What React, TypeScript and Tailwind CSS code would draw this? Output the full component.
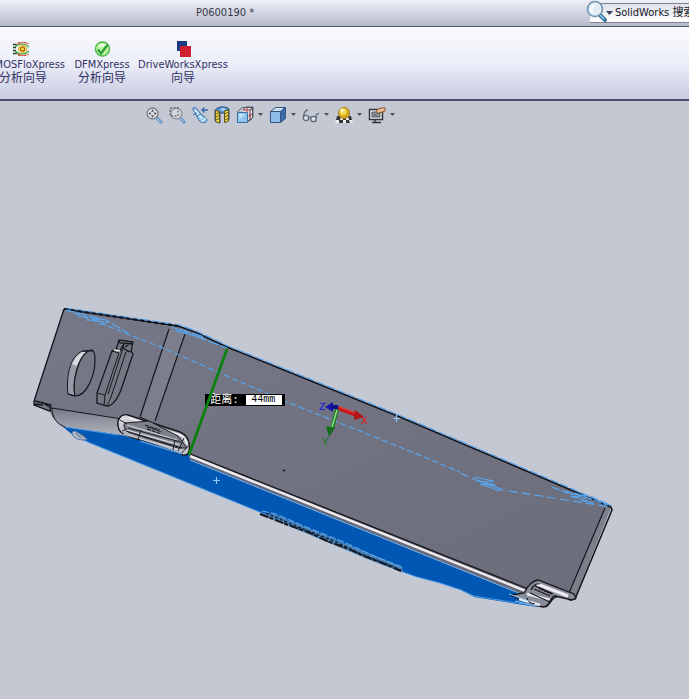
import React from "react";

// Small drop-down marker used next to view tools
const Caret = () => (
    <svg width="5" height="3" viewBox="0 0 5 3" aria-hidden="true">
        <path d="M0 0h5L2.500 3z" fill="#4b4f5c" />
    </svg>
);

const FloIcon = () => (
    <svg width="18" height="16" viewBox="0 0 18 16" fill="none">
        <path d="M1 3.500h4M1 6.500h3M1 9.500h3M1 12.500h4" stroke="#23402a" strokeWidth="1.500" />
        <path d="M4 4.500C7 1 13 1 17 3M4 11.500c3 3.500 9 3.500 13 1.500" stroke="#e07a5a" strokeWidth="1.200" />
        <path d="M6 1.500h9M6 14.500h9" stroke="#d05040" strokeDasharray="2 1" />
        <path d="M3 6c4-4 10-4 14 0M3 10c4 4 10 4 14 0" stroke="#3fa040" strokeWidth="1.200" />
        <path d="M6.500 8c0-4.500 8-4.500 8 0s-8 4.500-8 0z" fill="#f8ee3a" stroke="#d8a020" />
        <circle cx="10.500" cy="8" r="2" fill="#ffe840" stroke="#a8501c" strokeWidth="1.200" />
    </svg>
);

const DfmIcon = () => (
    <svg width="17" height="16" viewBox="0 0 17 16" fill="none">
        <circle cx="8.500" cy="8" r="7" fill="#b9f29c" stroke="#4cb848" strokeWidth="1.400" />
        <path d="M4 5.500C6 2 11 2 13 4.500 10 5 7 7 4 5.500z" fill="#effde6" />
        <path d="M4 8.500l3 4L13.500 4" stroke="#2a9a38" strokeWidth="2.200" />
    </svg>
);

const DriveIcon = () => (
    <svg width="15" height="16" viewBox="0 0 15 16">
        <path d="M1 0h10v10H1z" fill="#1c3a86" />
        <path d="M4 5h11v11H4z" fill="#cf2030" />
    </svg>
);

const ZoomFitIcon = () => (
    <svg width="18" height="18" viewBox="0 0 18 18" fill="none">
        <path d="M11 11l5 5" stroke="#5b8fc4" strokeWidth="3" strokeLinecap="round" />
        <path d="M11 11l4.500 4.500" stroke="#b9dcf5" strokeLinecap="round" />
        <circle cx="7.500" cy="7.500" r="5.500" fill="#d8dbe2" stroke="#777b86" strokeWidth="1.300" />
        <path d="M7.500 3.500l1.500 2H6zM7.500 11.500l1.500-2H6zM3.500 7.500l2-1.500v3zM11.500 7.500l-2-1.500v3z" fill="#34363d" />
    </svg>
);

const ZoomAreaIcon = () => (
    <svg width="18" height="18" viewBox="0 0 18 18" fill="none">
        <path d="M11 11l5 5" stroke="#5b8fc4" strokeWidth="3" strokeLinecap="round" />
        <path d="M11 11l4.500 4.500" stroke="#b9dcf5" strokeLinecap="round" />
        <circle cx="8.500" cy="7.500" r="5.500" fill="#d3d6de" stroke="#8b8f99" strokeWidth="1.300" />
        <path d="M2 2h8v8H2z" stroke="#4a4c54" strokeDasharray="2 1.500" />
    </svg>
);

const PreviousViewIcon = () => (
    <svg width="18" height="18" viewBox="0 0 18 18" fill="none">
        <path d="M1.500 2.500l3-1 5 6 5 4c3 2 1 6-3 5-2 0-4-2-5-5z" fill="#8fc3ea" stroke="#3b6ea4" />
        <path d="M4 4l7 9" stroke="#e8f5ff" strokeWidth="1.500" />
        <path d="M11 16l4-4" stroke="#d3ebfb" strokeWidth="1.500" />
        <path d="M2 9l4-2M6 10.500l4-3" stroke="#3b6ea4" />
        <path d="M17 4h-6M13.500 1.500L11 4l2.500 2.500" stroke="#3566a8" strokeWidth="1.300" />
    </svg>
);

const SectionIcon = () => (
    <svg width="16" height="18" viewBox="0 0 16 18">
        <path d="M1 4c3-4 11-4 14-1v11l-4 2V7H6v10l-5-2z" fill="#5b93cc" stroke="#34527a" />
        <path d="M1.500 4.500l4 1V17l-4-1.500z" fill="#f6dc3c" stroke="#5a5426" />
        <path d="M10.500 5l4-1v11l-4 1.500z" fill="#f6dc3c" stroke="#5a5426" />
        <path d="M2 8l3-1.500M2 11l3-1.500M2 14l3-1.500M11 8l3-1.500M11 11l3-1.500M11 14l3-1.500" stroke="#5a5426" />
        <path d="M6 3c2-1 4-1 6 0L9 5z" fill="#b9dcf6" />
    </svg>
);

const OrientationIcon = () => (
    <svg width="18" height="18" viewBox="0 0 18 18" fill="none">
        <path d="M7 4l3-3h7l-3 4v8l-3 3M14 4l3-3v10l-3 3" fill="#dfdfe6" stroke="#55565e" />
        <path d="M6 1.500h10.500V12l-4 4M1.500 6L6 1.500" stroke="#55565e" />
        <path d="M11 2v4M7 4h8M14 7v5M12.500 10l4-2" stroke="#b04040" />
        <path d="M1.500 6.500h10v10h-10z" fill="#8cc5ee" stroke="#3c6d9e" />
        <path d="M3 8h6l-6 6z" fill="#c0e2f8" />
    </svg>
);

const DisplayStyleIcon = () => (
    <svg width="18" height="18" viewBox="0 0 18 18" stroke="#36557f" strokeLinejoin="round">
        <path d="M1.500 5.500l5-4h10l-5 4z" fill="#c4e1f6" />
        <path d="M1.500 5.500h10v11h-10z" fill="#8ebee9" />
        <path d="M11.500 5.500l5-4v11l-5 4z" fill="#3d69ae" />
    </svg>
);

const GlassesIcon = () => (
    <svg width="18" height="18" viewBox="0 0 18 18" fill="none" stroke="#626875" strokeWidth="1.300">
        <circle cx="4" cy="12" r="2.700" fill="#d5e1e9" />
        <circle cx="11.500" cy="13" r="2.700" fill="#d5e1e9" />
        <path d="M6.500 12c1-1 2-1 2.500 0M1.500 11C2 6 3 4 6 4M14 12c0-4 1-5 3-4" />
    </svg>
);

const SceneIcon = () => (
    <svg width="18" height="18" viewBox="0 0 18 18">
        <path d="M3 10h12l3 7H0z" fill="#f2f2f2" />
        <path d="M2 10h4l-1 4H1zM8 12h3v2H8zM13 10h3l1 4h-3zM4 14h4v3H4zM11 14h3l1 3h-4z" fill="#33353b" />
        <circle cx="9" cy="7" r="5.500" fill="#d8aa20" stroke="#a37b12" />
        <circle cx="8" cy="5.500" r="3.500" fill="#f3dc58" />
        <circle cx="7" cy="4.500" r="1.500" fill="#fffbd8" />
    </svg>
);

const ViewSettingIcon = () => (
    <svg width="18" height="18" viewBox="0 0 18 18" fill="none">
        <path d="M1.500 3.500h13v10h-13z" fill="#eceef2" stroke="#34363d" strokeWidth="1.500" />
        <path d="M4 6h8v5H4z" fill="#9a9da6" stroke="#585b63" />
        <path d="M4 16.500h9M7 14v2" stroke="#34363d" strokeWidth="1.500" />
        <path d="M8 5l3-2.500 6-1v3.500l-4 1.500-3 1z" fill="#e9b98b" stroke="#8a5c38" />
        <path d="M4 7l8 4M4 11l8-5" stroke="#44464e" strokeDasharray="1 1" />
    </svg>
);

const wizards = [
    { label: "MOSFloXpress", sub: "分析向导", icon: <FloIcon />, box: "w-[65px] items-start", iconBox: "ml-3", labelBox: "self-end", subBox: "-ml-px" },
    { label: "DFMXpress", sub: "分析向导", icon: <DfmIcon />, box: "w-[54px] items-center", iconBox: "", labelBox: "", subBox: "" },
    { label: "DriveWorksXpress", sub: "向导", icon: <DriveIcon />, box: "w-[88px] items-center", iconBox: "", labelBox: "", subBox: "" },
];

const viewTools = [
    { name: "整屏显示全图", icon: <ZoomFitIcon />, menu: false },
    { name: "局部放大", icon: <ZoomAreaIcon />, menu: false },
    { name: "上一视图", icon: <PreviousViewIcon />, menu: false },
    { name: "剖面视图", icon: <SectionIcon />, menu: false },
    { name: "视图定向", icon: <OrientationIcon />, menu: true },
    { name: "显示样式", icon: <DisplayStyleIcon />, menu: true },
    { name: "隐藏/显示项目", icon: <GlassesIcon />, menu: true },
    { name: "应用布景", icon: <SceneIcon />, menu: true },
    { name: "视图设定", icon: <ViewSettingIcon />, menu: true },
];

const Model = () => (
    <svg className="block w-full" viewBox="0 128 689 571" fill="none">
        <defs>
            <linearGradient id="side" x1="0" y1="0" x2="1" y2="1">
                <stop offset="0" stopColor="#767887" />
                <stop offset="1" stopColor="#6b6d7b" />
            </linearGradient>
            <linearGradient id="fillet" x1="0" y1="0" x2="0" y2="1">
                <stop offset="0" stopColor="#777987" />
                <stop offset="1" stopColor="#b0b2bd" />
            </linearGradient>
            <linearGradient id="rim" x1="0" y1="0" x2="1" y2="1">
                <stop offset="0" stopColor="#e6e6ec" />
                <stop offset="0.5" stopColor="#8d8f9b" />
                <stop offset="1" stopColor="#c9cad2" />
            </linearGradient>
        </defs>

        {/* selected bottom face */}
        <path d="M62 426L118 434 188 453 277 491 440 557 530 594 545 603 538 607 517 604 474 597 461 590 440 583 417 577 400 571 262 513 90 443 74 436z" fill="#0058b4" />
        <path d="M538 606l-21-3-43-7-13-6-21-7-23-6-17-6-138-58L90 443l-16-7" stroke="#4d9ce8" />
        <path d="M72 432c0 6 5 8 15 8l-3-4-9-5z" fill="#b0b5c2" stroke="#5a7ba8" />
        <path d="M76 433l5 5M80 434l6 4" stroke="#4a6c9c" />

        {/* body */}
        <path d="M64 309L178 326 195 332 227 347 400 417 611 507 574 600 540 590 528 590 188 453 122 432 65 427 53 418 50 412 34 405 34 400z" fill="url(#side)" />
        <path d="M52 408l70 11-3 9 3 7-57-8c-8-3-13-9-13-19z" fill="url(#fillet)" />
        <path d="M170 328l15 5-30 88-14-4z" fill="#7c7e8b" />
        <path d="M605 508l6 0-37 91-6-5z" fill="#7c7e8b" />
        <path d="M190 456L528 593" stroke="#686a78" strokeWidth="6" />
        <path d="M190 456L528 592" stroke="#eeeaf0" strokeWidth="2.500" />
        <path d="M190 460L526 596" stroke="#8fb5df" />
        <path d="M188 453L528 589" stroke="#17171c" strokeWidth="1.300" />
        <path d="M64 309L178 326 195 332 227 347 400 417 611 507" stroke="#101116" strokeWidth="1.600" />
        <path d="M65 308L179 325 196 331 228 346 401 416 612 506" stroke="#4d9ce8" strokeWidth="1.200" strokeDasharray="9 2" />
        <path d="M64 309l114 17" stroke="#101116" strokeWidth="2" strokeDasharray="4 3" />
        <path d="M64 309L34 401v4l16 6 1-6-16-4M42 402l9 6M34 404l9 1" stroke="#121318" strokeWidth="1.300" />
        <path d="M52 408l70 11M52 408c0 10 5 16 13 19" stroke="#17171c" />
        <path d="M65 427l53 8" stroke="#4d9ce8" />
        <path d="M169 329l-29 88M185 334l-30 87" stroke="#17171c" strokeWidth="1.200" />
        <path d="M605 508l-36 85" stroke="#17171c" strokeWidth="1.200" />
        <path d="M611 507l1 3-37 89-6 1" stroke="#121318" strokeWidth="1.500" />

        {/* round button */}
        <path d="M83 351c-14 5-17 28-15 43l7 2c-3-15 3-38 13-45z" fill="#989aa7" stroke="#17171c" />
        <path d="M72 364c2-5 5-9 10-12l5 0c-5 3-8 8-10 14z" fill="#d7d8de" />
        <path d="M88 351c-10 7-16 30-13 45 12 0 20-21 20-36 0-5-1-9-3-10z" fill="#757785" stroke="#17171c" strokeWidth="1.200" />
        <path d="M83 351h10M68 394l7 2" stroke="#17171c" strokeWidth="1.200" />

        {/* slider slot */}
        <path d="M112 351l4-1 3-10 14 2-2 9 2 3-12 36c-5 12-10 16-14 16l-10-3v-10z" fill="#747684" stroke="#17171c" strokeWidth="1.300" />
        <path d="M119 353l-14 42-1 10M112 351l7 2M97 393l8 2M126 352l-15 45c-2 5-3 7-5 8M123 348l-15 46M131 352l-5-2" stroke="#17171c" />
        <path d="M116 350l4 1 3-6M119 340l1 3 13 1M124 343l-1 5 6 4M125 347l6-4" stroke="#17171c" strokeWidth="1.300" />
        <path d="M114 350l6 1" stroke="#f0f0f4" strokeWidth="1.500" />

        {/* connector opening */}
        <path d="M128 415c-8-2-11 6-10 11 1 6 4 8 8 9l57 20c7 1 7-7 6-12-1-6-4-9-9-11z" fill="url(#rim)" stroke="#17171c" strokeWidth="1.400" />
        <path d="M129 418l51 17c4 2 6 5 7 9" stroke="#eeeef2" strokeWidth="2" />
        <path d="M125 423l24-2 29 15 9 12-9 0-50-16c-4-3-5-7-3-9z" fill="#7d7f8b" stroke="#22232a" />
        <path d="M126 430l54 15M127 425l50 15M124 434l56 16" stroke="#d0d0d8" strokeWidth="1.300" />
        <path d="M128 428l53 14M126 431l56 17" stroke="#202127" />
        <path d="M147 427l15 5M147 429l14 5M145 425l15 5" stroke="#15161a" strokeDasharray="4 1" />
        <path d="M120 420l7 4M122 431l5-2M141 430l-3 10M140 417l9 4M175 440l-2 10M184 438l-6 13M188 446l-7 8" stroke="#202127" />
        <path d="M140 441l42 13" stroke="#4d9ce8" strokeWidth="1.500" />

        {/* corner bracket */}
        <path d="M524 593c4-8 8-12 14-13l36 14 2 4-4 2-17-4c-4 0-5 11-12 11l-9-2-15-6-8-4z" fill="#898b98" stroke="#17171c" strokeWidth="1.300" />
        <path d="M537 584l31 12" stroke="#eeeef2" strokeWidth="3" />
        <path d="M527 594l23 6M519 599l21 6" stroke="#eeeef2" strokeWidth="2.500" />
        <path d="M531 590c2-5 6-7 9-6M535 586l18 8M534 589l16 7M530 593l20 9M527 598c0 3 4 6 8 6M545 607c5-1 6-9 12-10M549 602l5-6" stroke="#17171c" strokeWidth="1.200" />
        <path d="M539 588l13 6" stroke="#121317" strokeWidth="2" strokeDasharray="2 1" />
        <path d="M509 594l20 7M515 601l22 5" stroke="#8fc3f3" />

        {/* speaker ribs on the lower edge */}
        <path d="M260 513l14 1 128 53 1 5-18-6-20-8-100-42z" fill="#4b83bb" />
        <path d="M260 514l28 11 20 7 19 9 22 8 15 7 21 8 16 7" stroke="#12151b" strokeWidth="2" strokeDasharray="9 1 4 2" />
        <path d="M266 513l25 11 20 8 23 9 25 12 42 17" stroke="#152437" strokeWidth="1.500" strokeDasharray="3 2" />
        <path d="M262 511l14 3 30 13 38 15 28 13 30 12" stroke="#66b0ee" strokeDasharray="7 2" />

        {/* hidden selected edges */}
        <g stroke="#58a6ee" strokeWidth="1.200">
            <path d="M66 310l24 9 35 14 43 17 54 24 65 28 103 41 70 29" strokeDasharray="6 3" />
            <path d="M66 310l40 10 22 13M78 316l24 3-16 1 22 2-10 3" strokeDasharray="10 2" />
            <path d="M460 473l18 8 25 9 50 8 58 9" strokeDasharray="9 4" />
            <path d="M474 477l20 4-12 1 14 3-16-1 20 7M478 480l15 6-14-5 24 9" />
            <path d="M552 487l18 7 20 2 20 9M565 491l22 7-17-2 24 7-15-3M575 493l32 12" strokeDasharray="8 2" />
            <path d="M172 327l20 8 35 13M176 331l28 7M180 329l24 8" strokeDasharray="11 2" />
            <path d="M213 480.500h7M216.500 477v7M393 418.500h7M396.500 415v7" stroke="#8fc7f7" />
        </g>
        <path d="M283 471l2-1" stroke="#17171c" strokeWidth="1.500" />

        {/* origin triad */}
        <path d="M338 408l19 7" stroke="#c81818" strokeWidth="4" />
        <path d="M340 407l16 6" stroke="#e85050" />
        <path d="M354 420l10-3-9-7z" fill="#b01414" />
        <path d="M337 409l-5 20" stroke="#1b7a20" strokeWidth="4" />
        <path d="M337 410l-5 17" stroke="#8fe08c" strokeWidth="1.500" />
        <path d="M326 426l9 2-6 9z" fill="#156a1a" />
        <path d="M325 407l8-5v10z" fill="#1818b0" />
        <path d="M331 407h7" stroke="#10108a" strokeWidth="4" />
        <g className="font-['Liberation_Mono',monospace] text-[11px]">
            <text x="319" y="410" fill="#1818e0">Z</text>
            <text x="361" y="424" fill="#e01818">X</text>
            <text x="322" y="445" fill="#127a18">Y</text>
        </g>
    </svg>
);

export default function App() {
    return (
        <div className="min-h-screen flex flex-col overflow-hidden bg-[#c4c8d3] font-['DejaVu_Sans_Condensed','Noto_Sans_CJK_SC',sans-serif] text-[11px]">
            {/* Title bar */}
            <header className="h-[27px] shrink-0 flex items-center justify-between border-b border-[#50546a] bg-linear-to-b from-[#eef0f7] to-[#b5b9cb]">
                <h1 className="pl-[196px] text-[#35374a]">P0600190 *</h1>
                <div className="relative w-[99px] h-5 flex items-center border-y border-[#7f8494] bg-linear-to-b from-[#dfe1ea] to-white pl-4">
                    <svg className="absolute -left-1 -top-1" width="22" height="24" viewBox="0 0 22 24" fill="none" aria-hidden="true">
                        <path d="M13 14l6 6" stroke="#356f9c" strokeWidth="4" strokeLinecap="round" />
                        <path d="M14 15l4 4" stroke="#8fd0ee" strokeWidth="1.500" strokeLinecap="round" />
                        <circle cx="9" cy="9" r="7.500" fill="#e1eef5" stroke="#6f93b0" strokeWidth="1.600" />
                        <path d="M6 13c-2-4 0-7 3-8" stroke="#fff" strokeWidth="2" />
                    </svg>
                    <svg className="shrink-0" width="7" height="4" viewBox="0 0 7 4" aria-hidden="true">
                        <path d="M0 0h7L3.500 4z" fill="#34405f" />
                    </svg>
                    <input type="text" aria-label="SolidWorks 搜索" placeholder="SolidWorks 搜索" className="min-w-0 flex-1 pl-[2px] bg-transparent outline-none placeholder:text-[#15161c]" />
                </div>
            </header>

            {/* Ribbon */}
            <nav className="shrink-0 h-[74px] flex items-start gap-[10px] pt-[14px] border-b-2 border-[#4c4b68] bg-linear-to-b from-[#fbfbfe] via-[#eceef9] to-[#c9cbe2]">
                {wizards.map(w => (
                    <button key={w.label} type="button" className={`flex flex-col whitespace-nowrap text-[#303062] ${w.box}`}>
                        <span className={w.iconBox}>{w.icon}</span>
                        <span className={`leading-4 ${w.labelBox}`}>{w.label}</span>
                        <span className={`text-xs leading-[10px] ${w.subBox}`}>{w.sub}</span>
                    </button>
                ))}
            </nav>

            <main className="flex-1">
                {/* View tools */}
                <div className="h-[27px] flex items-center gap-[5px] pl-[145px]">
                    {viewTools.map(t => (
                        <button key={t.name} type="button" aria-label={t.name} className={t.menu ? "flex items-center gap-1 ml-px" : "flex items-center"}>
                            {t.icon}
                            {t.menu && <Caret />}
                        </button>
                    ))}
                </div>

                {/* Graphics area */}
                <div className="relative">
                    <Model />
                    <div className="absolute left-[29.8%] top-[46.5%] h-3 flex items-center bg-black pl-[5px] pr-[3px] text-[11px] leading-3 text-white">
                        <span className="w-9 whitespace-nowrap font-['Liberation_Mono','Noto_Sans_CJK_SC',monospace]">距离:</span>
                        <span className="w-9 h-[10px] bg-white pl-[5px] font-['Liberation_Mono',monospace] text-[10px] leading-[10px] text-black">44mm</span>
                    </div>
                    {/* measured distance */}
                    <svg className="absolute inset-0 w-full pointer-events-none" viewBox="0 128 689 571" fill="none" aria-hidden="true">
                        <path d="M227 349L189 455" stroke="#0a800f" strokeWidth="2.800" />
                    </svg>
                </div>
            </main>
        </div>
    );
}
